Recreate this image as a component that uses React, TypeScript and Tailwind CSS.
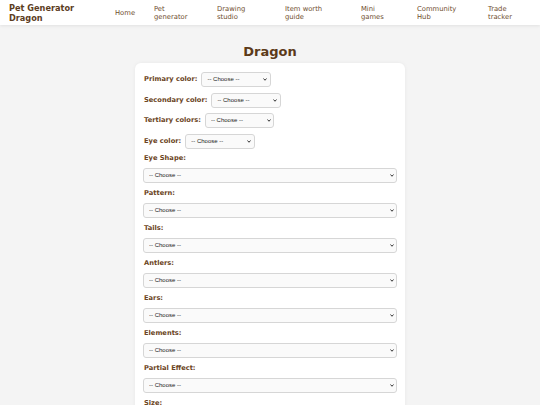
import React from 'react'

const NAV = [
  { lines: ['Home'], w: 'w-[39px]' },
  { lines: ['Pet', 'generator'], w: 'w-[63px]' },
  { lines: ['Drawing', 'studio'], w: 'w-[68px]' },
  { lines: ['Item worth', 'guide'], w: 'w-[76px]' },
  { lines: ['Mini', 'games'], w: 'w-[56px]' },
  { lines: ['Community', 'Hub'], w: 'w-[71px]' },
  { lines: ['Trade', 'tracker'], w: 'w-[40px]' },
]

const INLINE = ['Primary color:', 'Secondary color:', 'Tertiary colors:', 'Eye color:']

const STACKED = ['Eye Shape:', 'Pattern:', 'Tails:', 'Antlers:', 'Ears:', 'Elements:', 'Partial Effect:', 'Size:']

function Chooser({ wide }: { wide?: boolean }) {
  return (
    <div className={`relative h-[15px] shrink-0 ${wide ? 'w-full' : 'w-[69.5px]'}`}>
      <select
        defaultValue=""
        className="block h-full w-full appearance-none rounded-[3px] border border-[#d6d6d6] bg-[#fafafa] py-0 pl-[5px] text-[6px] leading-[13px] text-[#222] outline-none [font-family:'Liberation_Sans',Arial,sans-serif]"
      >
        <option value="">-- Choose --</option>
      </select>
      {/* chevron */}
      <svg
        viewBox="0 0 8 6"
        className="pointer-events-none absolute right-[3.5px] top-[6px] block h-[3px] w-[4px]"
      >
        <path d="M1 1 L4 4.5 L7 1" fill="none" stroke="#222" strokeWidth="1.8" />
      </svg>
    </div>
  )
}

export default function App() {
  return (
    <div className="min-h-[405px] bg-[#f4f4f4] [font-family:'DejaVu_Sans',Verdana,sans-serif]">
      {/* Header */}
      <header className="flex h-[25px] items-center bg-white shadow-[0_1px_3px_rgba(0,0,0,0.08)]">
        <div className="w-[115px] pl-[9px] text-[8.2px] font-bold leading-[10px] text-[#5c3d1e]">
          Pet Generator
          <br />
          Dragon
        </div>
        <nav className="flex items-center">
          {NAV.map((n) => (
            <div key={n.lines[0]} className={`${n.w} text-[6.8px] leading-[8px] text-[#6f4d2e]`}>
              {n.lines.map((l) => (
                <div key={l} className="whitespace-nowrap">{l}</div>
              ))}
            </div>
          ))}
        </nav>
      </header>

      <h1 className="mt-[19px] text-center text-[13px] font-bold leading-[16px] text-[#5c3a19]">Dragon</h1>

      <div className="mx-auto mt-[3px] w-[270px] rounded-[6px] bg-white px-[8px] pt-[9px] pb-4 shadow-[0_0_4px_rgba(0,0,0,0.05)]">
        <div className="flex flex-col gap-[5.5px]">
          {INLINE.map((l) => (
            <div key={l} className="flex items-center gap-[4px] pl-[1px]">
              <span className="text-[6.7px] font-bold leading-[9px] text-[#6b4423]">{l}</span>
              <Chooser />
            </div>
          ))}
        </div>
        <div className="mt-[5px] flex flex-col">
          {STACKED.map((l) => (
            <div key={l} className="mb-[6px]">
              <div className="mb-[5px] pl-[1px] text-[6.7px] font-bold leading-[9px] text-[#6b4423]">{l}</div>
              <Chooser wide />
            </div>
          ))}
        </div>
      </div>
    </div>
  )
}
